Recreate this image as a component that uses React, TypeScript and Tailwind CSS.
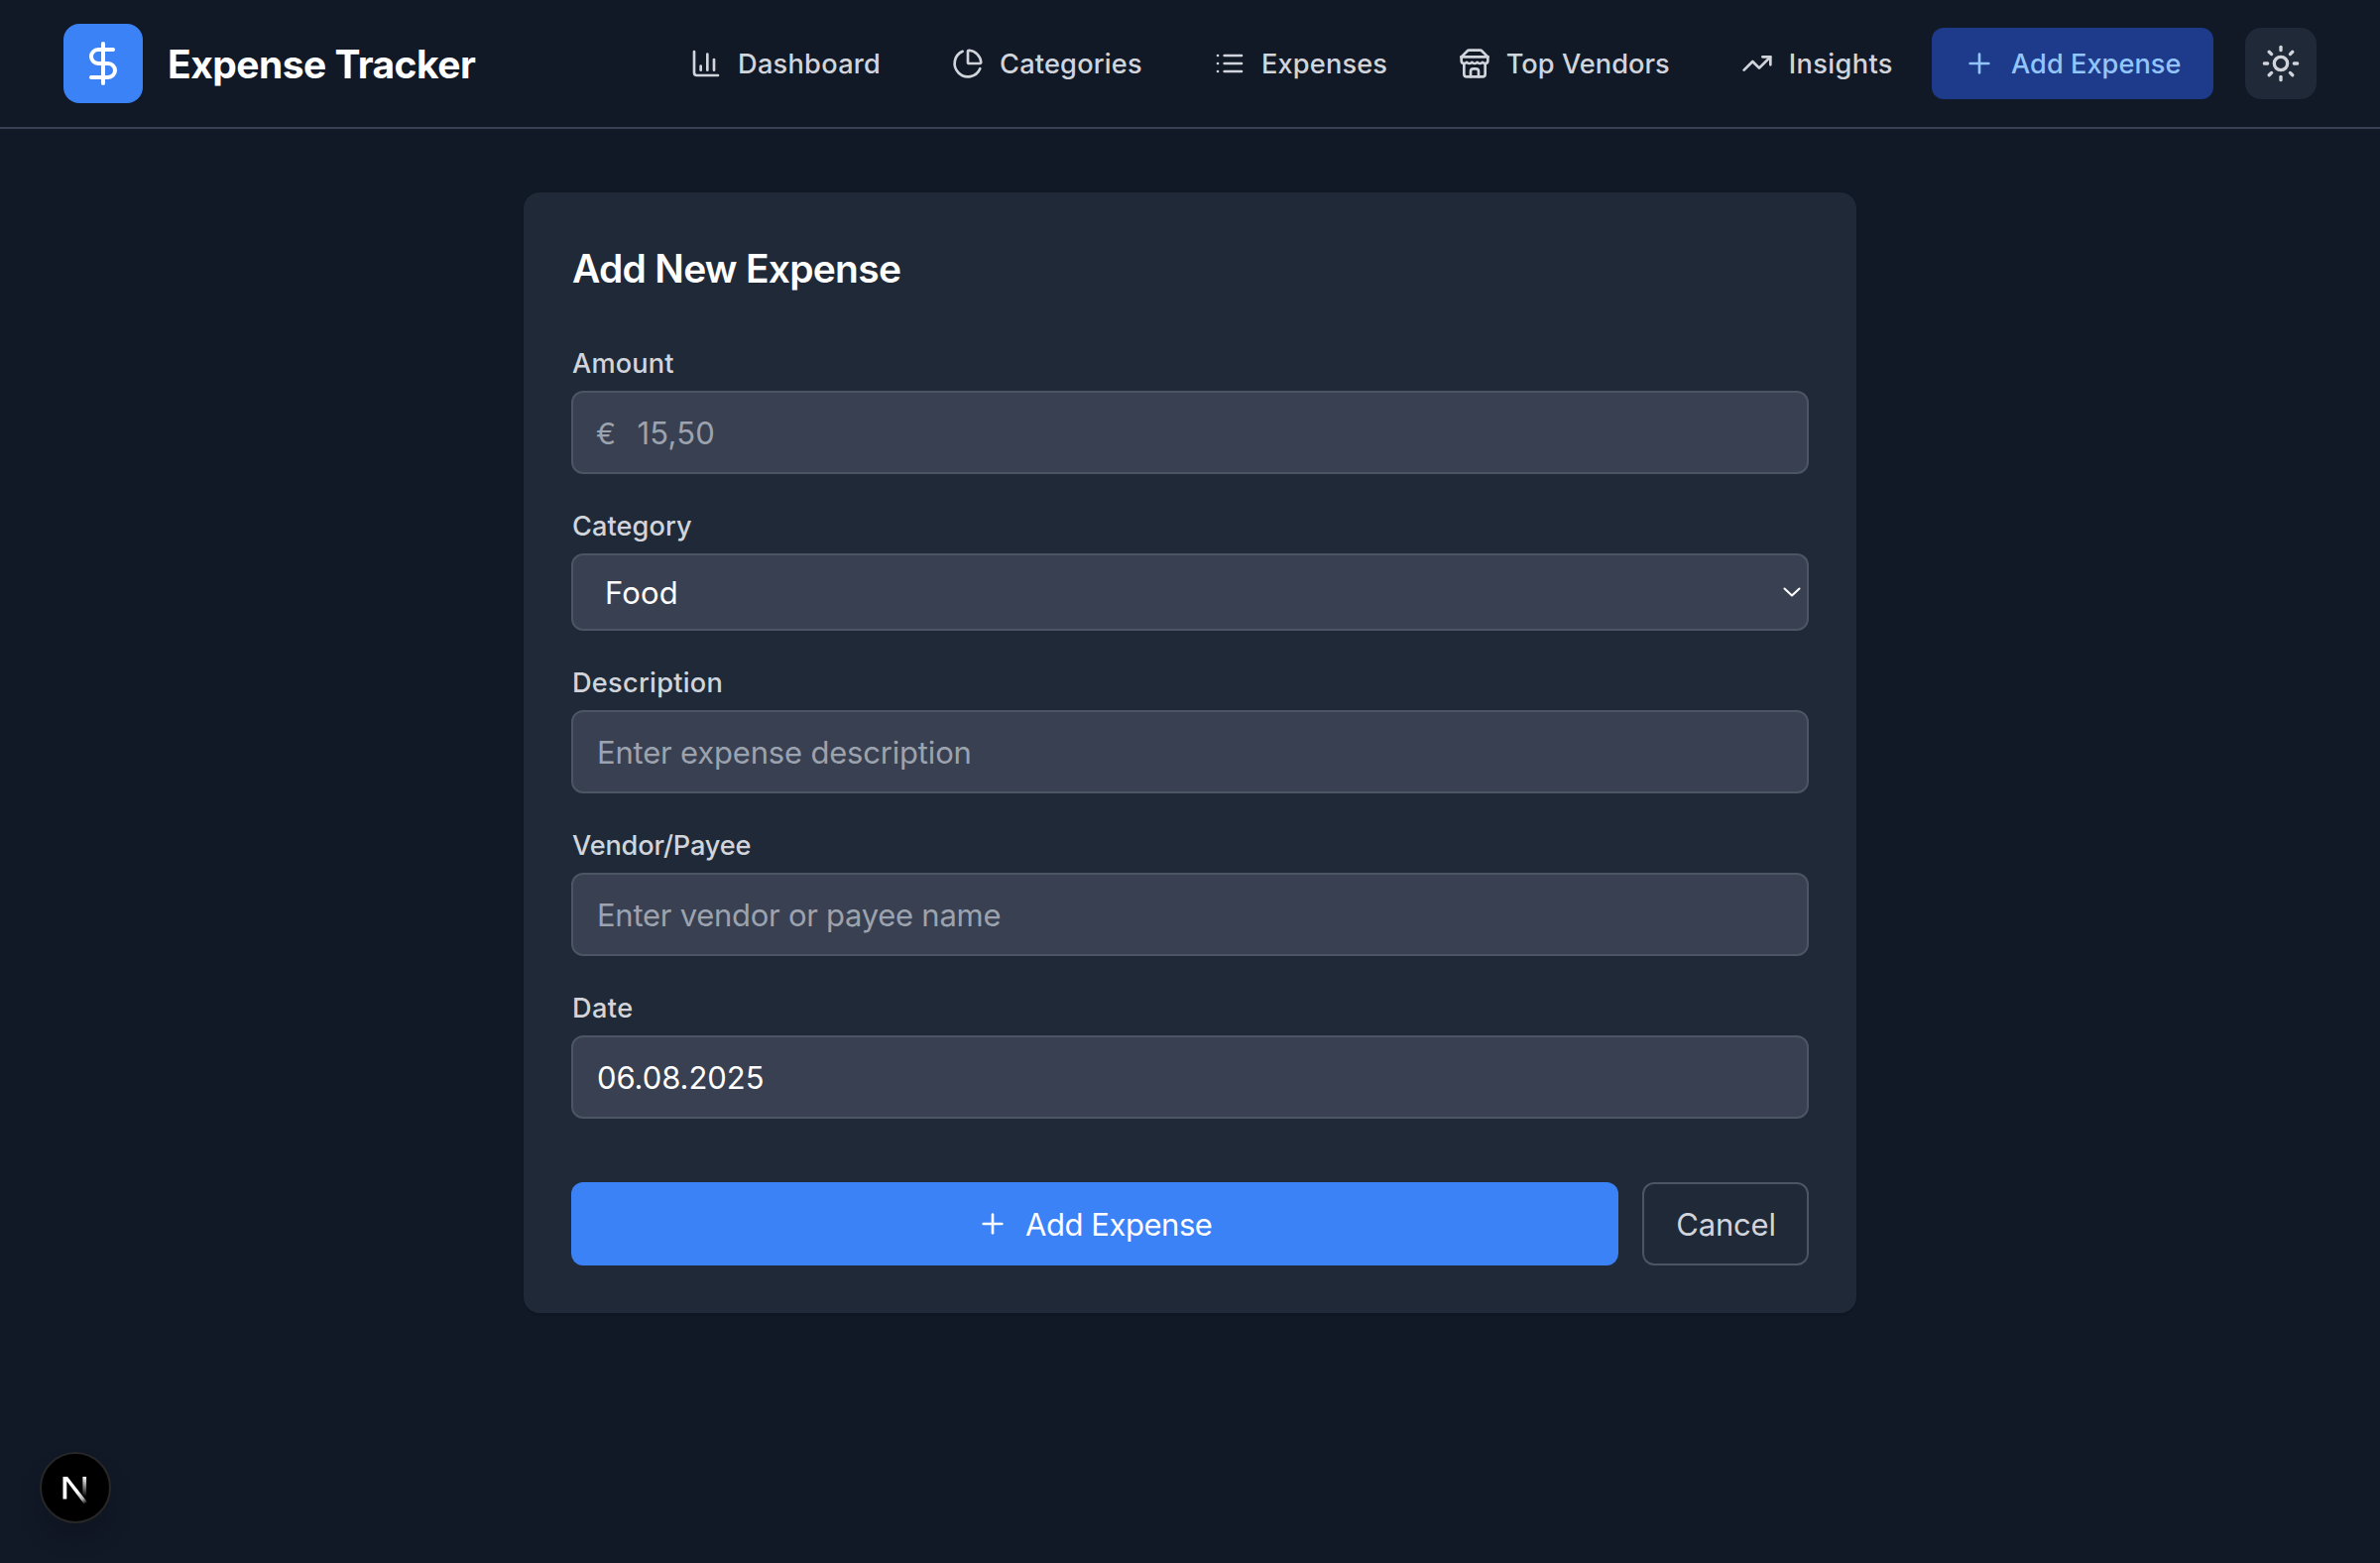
import React from "react";

type IconProps = { className?: string; children: React.ReactNode };

function Icon({ className, children }: IconProps) {
  return (
    <svg
      viewBox="0 0 24 24"
      fill="none"
      stroke="currentColor"
      strokeWidth={2}
      strokeLinecap="round"
      strokeLinejoin="round"
      className={className}
    >
      {children}
    </svg>
  );
}

const plus = (
  <>
    <path d="M5 12h14" />
    <path d="M12 5v14" />
  </>
);

const navItems = [
  {
    label: "Dashboard",
    text: "w-[144px] tracking-[0.26px]",
    icon: (
      <>
        <path d="M3 3v16a2 2 0 0 0 2 2h16" />
        <path d="M18 17V9" />
        <path d="M13 17V5" />
        <path d="M8 17v-3" />
      </>
    ),
  },
  {
    label: "Categories",
    text: "w-[144px] tracking-[0.19px]",
    icon: (
      <>
        <path d="M21 12c.552 0 1.005-.449.95-.998a10 10 0 0 0-8.953-8.951c-.55-.055-.998.398-.998.95v8a1 1 0 0 0 1 1z" />
        <path d="M21.21 15.89A10 10 0 1 1 8 2.83" />
      </>
    ),
  },
  {
    label: "Expenses",
    text: "w-[126.7px] tracking-[0.14px]",
    icon: (
      <>
        <path d="M3 12h.01" />
        <path d="M3 18h.01" />
        <path d="M3 6h.01" />
        <path d="M8 12h13" />
        <path d="M8 18h13" />
        <path d="M8 6h13" />
      </>
    ),
  },
  {
    label: "Top Vendors",
    text: "w-[165px] tracking-[0.03px]",
    icon: (
      <>
        <path d="m2 7 4.41-4.41A2 2 0 0 1 7.83 2h8.34a2 2 0 0 1 1.42.59L22 7" />
        <path d="M4 12v8a2 2 0 0 0 2 2h12a2 2 0 0 0 2-2v-8" />
        <path d="M15 22v-4a2 2 0 0 0-2-2h-2a2 2 0 0 0-2 2v4" />
        <path d="M2 7h20" />
        <path d="M22 7v3a2 2 0 0 1-2 2a2.7 2.7 0 0 1-1.59-.63.7.7 0 0 0-.82 0A2.7 2.7 0 0 1 16 12a2.7 2.7 0 0 1-1.59-.63.7.7 0 0 0-.82 0A2.7 2.7 0 0 1 12 12a2.7 2.7 0 0 1-1.59-.63.7.7 0 0 0-.82 0A2.7 2.7 0 0 1 8 12a2.7 2.7 0 0 1-1.59-.63.7.7 0 0 0-.82 0A2.7 2.7 0 0 1 4 12a2 2 0 0 1-2-2V7" />
      </>
    ),
  },
  {
    label: "Insights",
    text: "w-[104.3px] tracking-[0.38px]",
    icon: (
      <>
        <path d="M16 7h6v6" />
        <path d="m22 7-8.5 8.5-5-5L2 17" />
      </>
    ),
  },
];

function Header() {
  return (
    <header className="flex h-[130px] items-center justify-between border-b-2 border-[#384051] px-16">
      <div className="flex items-center gap-[25px]">
        <div className="flex size-20 items-center justify-center rounded-2xl bg-[#3b82f6] text-white">
          <Icon className="size-12">
            <path d="M12 2v20" />
            <path d="M17 5H9.5a3.5 3.5 0 0 0 0 7h5a3.5 3.5 0 0 1 0 7H6" />
          </Icon>
        </div>
        <h1 className="pt-px text-[39px] leading-14 font-bold tracking-[-0.54px] whitespace-nowrap text-white">
          Expense Tracker
        </h1>
      </div>
      <div className="flex items-center gap-8">
        <nav className="flex items-center gap-2 text-[27.2px] leading-10 font-medium whitespace-nowrap text-[#d1d5db]">
          {navItems.map((item) => (
            <a key={item.label} className="flex h-18 items-center gap-4 rounded-xl px-8">
              <Icon className="size-8 shrink-0">{item.icon}</Icon>
              <span className={"pt-0.5 " + item.text}>{item.label}</span>
            </a>
          ))}
          <a className="flex h-18 w-[284px] items-center gap-4 rounded-xl bg-[#1e3a8a] px-8 text-[#93c5fd]">
            <Icon className="size-8 shrink-0">{plus}</Icon>
            <span className="pt-0.5 tracking-[0.02px]">Add Expense</span>
          </a>
        </nav>
        <button className="flex size-18 items-center justify-center rounded-2xl bg-[#1f2937] text-[#d1d5db]">
          <Icon className="size-10">
            <circle cx="12" cy="12" r="4" />
            <path d="M12 2v2" />
            <path d="M12 20v2" />
            <path d="m4.93 4.93 1.41 1.41" />
            <path d="m17.66 17.66 1.41 1.41" />
            <path d="M2 12h2" />
            <path d="M20 12h2" />
            <path d="m6.34 17.66-1.41 1.41" />
            <path d="m19.07 4.93-1.41 1.41" />
          </Icon>
        </button>
      </div>
    </header>
  );
}

const box = "flex items-center rounded-xl border-2 border-[#4b5563] bg-[#384051] text-[31px] leading-12 whitespace-nowrap";

function Field({ label, tracking, children }: { label: string; tracking: string; children: React.ReactNode }) {
  return (
    <div className="flex flex-col gap-2">
      <div className={"pt-0.5 pl-px text-[27.2px] leading-[38px] font-medium text-[#d1d5db] " + tracking}>{label}</div>
      {children}
    </div>
  );
}

function ExpenseForm() {
  return (
    <section className="w-[1344px] rounded-2xl bg-[#1f2937] p-12 shadow-sm">
      <h2 className="mb-12 pt-px pl-px text-[39px] leading-[55px] font-semibold tracking-[-0.75px] text-white">
        Add New Expense
      </h2>
      <div className="flex flex-col gap-8">
        <Field label="Amount" tracking="tracking-[0.12px]">
          <div className={box + " h-[84px] px-[23px] pt-0.5 text-[#9ca3af]"}>
            <span className="w-[41.5px] text-[30px]">€</span>
            <span className="tracking-[0.22px]">15,50</span>
          </div>
        </Field>
        <Field label="Category" tracking="tracking-[0.05px]">
          <div className={box + " h-[78px] justify-between pr-[5px] pl-8 text-white"}>
            <span className="pt-0.5 tracking-[0.18px]">Food</span>
            <svg viewBox="0 0 20 12" fill="none" stroke="currentColor" strokeWidth={2.1} strokeLinecap="round" strokeLinejoin="round" className="h-3 w-5">
              <path d="M2.5 2.5 10 9.5l7.5-7" />
            </svg>
          </div>
        </Field>
        <Field label="Description" tracking="tracking-[0.25px]">
          <div className={box + " h-[84px] px-6 pt-0.5 tracking-[-0.19px] text-[#9ca3af]"}>Enter expense description</div>
        </Field>
        <Field label="Vendor/Payee" tracking="tracking-[-0.17px]">
          <div className={box + " h-[84px] px-6 pt-0.5 tracking-[-0.27px] text-[#9ca3af]"}>Enter vendor or payee name</div>
        </Field>
        <Field label="Date" tracking="tracking-[0.4px]">
          <div className={box + " h-[84px] px-6 pt-0.5 tracking-[-0.06px] text-white"}>06.08.2025</div>
        </Field>
      </div>
      <div className="mt-16 flex gap-6 text-[31px] leading-12 whitespace-nowrap">
        <button className="flex h-[84px] flex-1 items-center justify-center gap-4 rounded-xl bg-[#3b82f6] text-white">
          <Icon className="size-8">{plus}</Icon>
          <span className="w-[190px] pt-0.5 pl-px text-left tracking-[-0.45px]">Add Expense</span>
        </button>
        <button className="flex h-[84px] w-[168px] items-center justify-center rounded-xl border-2 border-[#4b5563] pt-0.5 pl-px tracking-[-0.2px] text-[#d1d5db]">
          Cancel
        </button>
      </div>
    </section>
  );
}

function DevBadge() {
  return (
    <div className="absolute bottom-10 left-10 size-18 rounded-full border-2 border-[#272727] bg-black shadow-[0_16px_32px_-8px_rgba(0,0,0,0.24)]">
      <svg viewBox="2 2 68 68" fill="none" className="size-full">
        <defs>
          <linearGradient id="diag" x1="38" y1="40" x2="47" y2="52" gradientUnits="userSpaceOnUse">
            <stop stopColor="white" />
            <stop offset="0.6" stopColor="white" stopOpacity="0.7" />
            <stop offset="1" stopColor="white" stopOpacity="0" />
          </linearGradient>
          <linearGradient id="stem" x1="45" y1="25" x2="45" y2="45" gradientUnits="userSpaceOnUse">
            <stop stopColor="white" />
            <stop offset="1" stopColor="white" stopOpacity="0" />
          </linearGradient>
        </defs>
        <path d="M23.5 25h4.6L48 50.5 44.8 52.5 27.3 29.5V47.5h-3.8z" fill="url(#diag)" />
        <path d="M43.4 25h3.7v20h-3.7z" fill="url(#stem)" />
      </svg>
    </div>
  );
}

export default function App() {
  return (
    <div className="relative h-[1576px] w-[2400px] overflow-hidden bg-[#111826] font-['Inter',sans-serif]">
      <Header />
      <main className="flex justify-center pt-16">
        <ExpenseForm />
      </main>
      <DevBadge />
    </div>
  );
}
